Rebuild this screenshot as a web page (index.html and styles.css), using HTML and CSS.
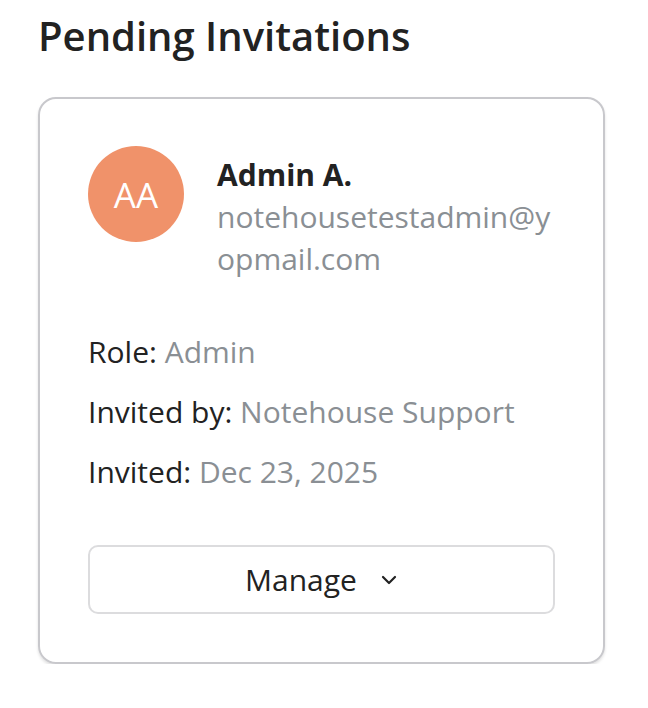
FILE: index.html
```html
<!DOCTYPE html>
<html>
<head>
<meta charset="utf-8">
<link rel="stylesheet" href="styles.css">
</head>
<body>
<main class="page">
  <h1 class="title">Pending Invitations</h1>
  <section class="card">
    <div class="head">
      <div class="avatar">AA</div>
      <div class="who">
        <div class="name">Admin A.</div>
        <div class="email">notehousetestadmin@yopmail.com</div>
      </div>
    </div>
    <div class="details">
      <div class="row"><span class="label">Role:</span> <span class="value">Admin</span></div>
      <div class="row"><span class="label">Invited by:</span> <span class="value">Notehouse Support</span></div>
      <div class="row"><span class="label">Invited:</span> <span class="value">Dec 23, 2025</span></div>
    </div>
    <button class="manage" type="button">
      <span>Manage</span>
      <svg class="chev" width="18" height="12" viewBox="0 0 18 12"><path d="M3 3 L9 9 L15 3" fill="none" stroke="#222" stroke-width="2.2" stroke-linecap="round" stroke-linejoin="round"/></svg>
    </button>
  </section>
</main>
</body>
</html>
```
FILE: styles.css
```css
* { box-sizing: border-box; }
body {
  margin: 0;
  background: #fff;
  font-family: "Open Sans", "Noto Sans", sans-serif;
  color: #222;
}
.page {
  padding: 8px 43px 0 38px;
}
.title {
  margin: 0 0 33px;
  font-size: 40px;
  font-weight: 600;
  line-height: 56px;
  color: #222;
}
.card {
  width: 567px;
  border: 2px solid #c8c8cc;
  border-radius: 18px;
  padding: 47px 48px 48px;
  box-shadow: 0 2px 3px rgba(0,0,0,0.12);
}
.head {
  display: flex;
  align-items: flex-start;
  gap: 33px;
}
.avatar {
  flex: none;
  width: 96px;
  height: 96px;
  border-radius: 50%;
  background: #f0926a;
  color: #fff;
  display: flex;
  align-items: center;
  justify-content: center;
  font-size: 35px;
  font-weight: 400;
}
.who {
  flex: 1;
  min-width: 0;
  padding-top: 8px;
}
.name {
  font-size: 30px;
  font-weight: 700;
  line-height: 42px;
  color: #222;
}
.email {
  font-size: 30px;
  line-height: 42px;
  color: #8a8f94;
  word-break: break-all;
}
.details {
  margin-top: 42px;
}
.row {
  font-size: 30px;
  line-height: 60px;
}
.label { color: #222; }
.value { color: #8a8f94; }
.manage {
  margin-top: 43px;
  width: 100%;
  height: 69px;
  border: 2px solid #dcdcde;
  border-radius: 10px;
  background: #fff;
  display: flex;
  align-items: center;
  justify-content: center;
  gap: 23px;
  font-family: "Open Sans", "Noto Sans", sans-serif;
  font-size: 30px;
  color: #222;
  padding: 0;
}
.chev { display: block; margin-top: 0; }
```
